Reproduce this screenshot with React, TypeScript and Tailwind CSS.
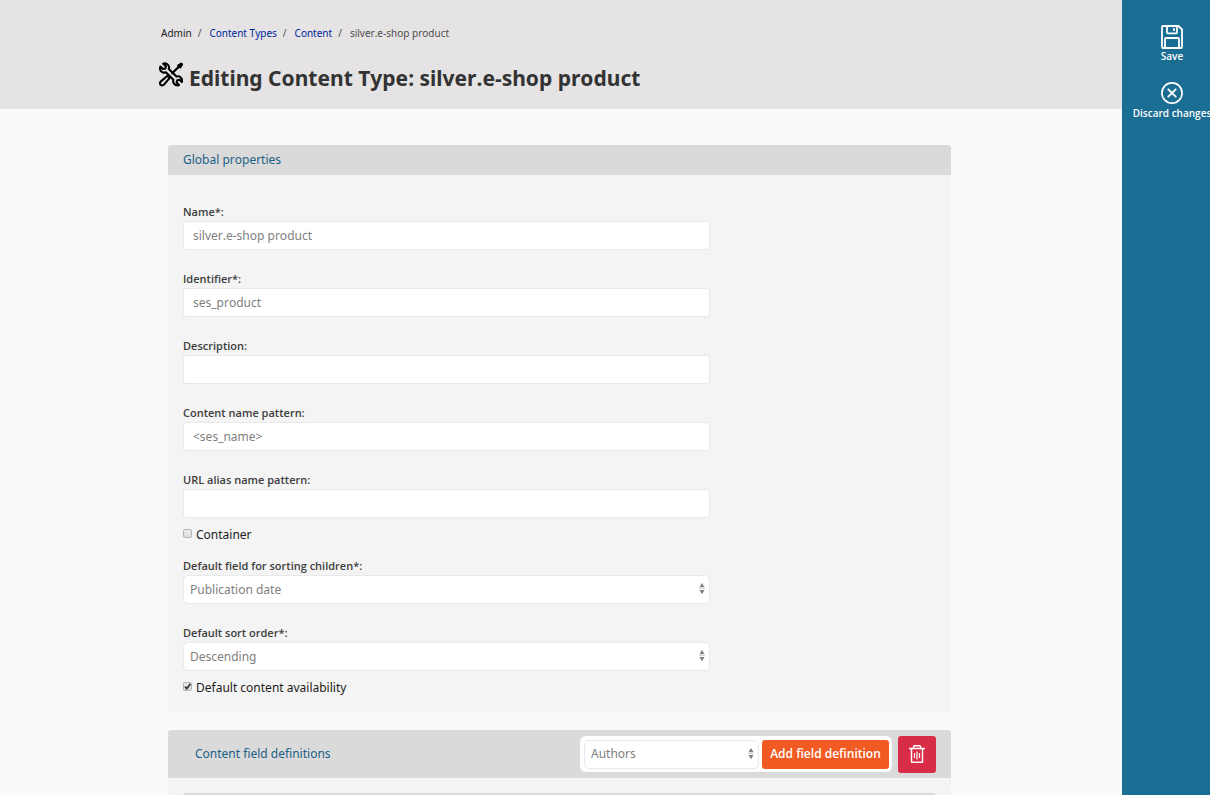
import React, { useId } from "react";

function ToolsIcon() {
  return (
    <svg
      viewBox="0 0 24 24"
      className="h-[25px] w-6 shrink-0"
      fill="none"
      stroke="#000"
      strokeWidth="2.1"
      strokeLinejoin="round"
      strokeLinecap="round"
      aria-hidden="true"
    >
      <path d="M4.2 1.2 6.9 3.7 6.4 6 4 6.6 1.4 4C.6 6.200 1.200 8.200 2.800 9.400 4 10.200 5.600 10.300 6.800 9.800L14.400 17.300C13.900 18.700 14.100 20.300 15.300 21.600 16.500 22.800 18.400 23.200 20 22.600L17.600 20.100 18.200 17.800 20.500 17.200 22.800 19.600C23.400 18 23 16.100 21.700 14.900 20.500 13.800 18.900 13.600 17.500 14.100L9.800 6.500C10.300 5.100 10.100 3.600 9 2.400 7.700 1 5.800.6 4.200 1.200Z" />
      <path d="M8.600 13.200 2.200 18.600C.9 19.800.8 21.300 1.600 22.200 2.500 23.200 4.100 23.100 5.200 21.900L10.700 15.300Z" fill="#e5e3e4" />
      <path d="M13.200 10.800 20.300 3.700" strokeWidth="2.200" />
      <path d="M19.200 3 22.200 1 23.100 1.900 21.200 4.900Z" fill="#000" />
    </svg>
  );
}

function SaveIcon() {
  return (
    <svg viewBox="0 0 22 24" className="h-6 w-[22px]" fill="none" stroke="#fff" strokeWidth="1.8" strokeLinejoin="round" aria-hidden="true">
      <path d="M1 2Q1 1 2 1H17.500L21 4.500V22Q21 23 20 23H2Q1 23 1 22Z" />
      <path d="M6 1V7.300Q6 8.300 7 8.300H15Q16 8.300 16 7.300V1" />
      <path d="M13 3V6" />
      <path d="M4 23V14Q4 13 5 13H17Q18 13 18 14V23" />
    </svg>
  );
}

function DiscardIcon() {
  return (
    <svg viewBox="0 0 22 22" className="size-[22px]" fill="none" stroke="#fff" strokeWidth="1.700" strokeLinecap="round" aria-hidden="true">
      <circle cx="11" cy="11" r="10.100" />
      <path d="M7.300 7.300 14.700 14.700M14.700 7.300 7.300 14.700" strokeWidth="1.900" />
    </svg>
  );
}

function TrashIcon() {
  return (
    <svg viewBox="0 0 16 18" className="h-[18px] w-4" fill="none" stroke="#fff" aria-hidden="true">
      <path d="M0 3.500H16" strokeWidth="1.500" />
      <path d="M4.500 3V1.500Q4.500.7 5.300.7H10.700Q11.500.7 11.500 1.500V3" strokeWidth="1.400" />
      <path d="M2.500 4V16.500Q2.500 17.300 3.300 17.300H12.700Q13.500 17.300 13.500 16.500V4" strokeWidth="1.500" />
      <path d="M5.500 8V13M8 6.500V14.500M10.500 8V13" strokeWidth="1.200" />
    </svg>
  );
}

type FieldProps = { label: string; value: string };

function TextField({ label, value }: FieldProps) {
  const id = useId();
  return (
    <div className="flex flex-col">
      <label htmlFor={id} className="font-['Open_Sans','Noto_Sans',sans-serif] text-[11px] leading-[18px] font-semibold text-[#3d3d3d]">
        {label}
      </label>
      <input
        id={id}
        type="text"
        defaultValue={value}
        className="h-[29px] w-full rounded-[3px] border border-[#e9e9e9] bg-white px-[9px] text-xs text-[#808080] outline-none"
      />
    </div>
  );
}

function Picker({ id, label, options }: { id: string; label?: string; options: string[] }) {
  return (
    <div className="relative w-full">
      <select
        id={id}
        aria-label={label}
        className="block h-[29px] w-full appearance-none rounded-[5px] border border-[#e9e9e9] bg-white pr-5 pl-[6px] text-xs text-[#808080] outline-none"
      >
        {options.map((o) => (
          <option key={o}>{o}</option>
        ))}
      </select>
      <svg viewBox="0 0 6 12" className="pointer-events-none absolute top-2 right-[5px] h-3 w-[6px]" aria-hidden="true">
        <path d="M3 0 5.600 4.300H.4ZM3 11.300.4 7H5.600Z" fill="#808080" />
        <path d="M0 5.500H6" stroke="#d4d4d4" />
      </svg>
    </div>
  );
}

function SelectField({ label, options }: { label: string; options: string[] }) {
  const id = useId();
  return (
    <div className="flex flex-col">
      <label htmlFor={id} className="font-['Open_Sans','Noto_Sans',sans-serif] text-[11px] leading-[18px] font-semibold text-[#3d3d3d]">
        {label}
      </label>
      <Picker id={id} options={options} />
    </div>
  );
}

function CheckField({ label, checked }: { label: string; checked?: boolean }) {
  return (
    <label className="flex h-5 w-fit items-center gap-1 text-xs text-[#1c1c1c]">
      <span className="relative mb-1 flex">
        <input
          type="checkbox"
          defaultChecked={checked}
          className="peer size-[9px] appearance-none rounded-[2px] border border-[#b4b4b4] bg-linear-to-b from-[#ededed] to-[#dcdcdc]"
        />
        <svg viewBox="0 0 9 9" className="pointer-events-none absolute inset-0 hidden size-[9px] peer-checked:block" aria-hidden="true">
          <path d="M2 4.600 3.800 6.600 7.400 1.800" fill="none" stroke="#333" strokeWidth="1.700" />
        </svg>
      </span>
      {label}
    </label>
  );
}

export default function App() {
  return (
    <div className="flex h-screen overflow-hidden bg-[#fafafa] font-['Noto_Sans',sans-serif] [font-kerning:none]">
      <main className="min-w-0 flex-1 overflow-hidden">
        <header className="h-[109px] bg-[#e5e3e4] pt-[25px] pl-[159px]">
          <nav aria-label="Breadcrumb">
            <ol className="flex pl-[2px] text-[10px] leading-4 text-[#4d4d4d]">
              <li className="text-[#222]">Admin</li>
              <li className="pl-[6px]" aria-hidden="true">/</li>
              <li className="pl-2"><a href="#types" className="text-[#00269b]">Content Types</a></li>
              <li className="pl-[6px]" aria-hidden="true">/</li>
              <li className="pl-2"><a href="#content" className="text-[#00269b]">Content</a></li>
              <li className="pl-[6px]" aria-hidden="true">/</li>
              <li className="pl-2">silver.e-shop product</li>
            </ol>
          </nav>
          <div className="mt-[21px] flex items-start gap-[6px]">
            <ToolsIcon />
            <h1 className="text-[21px] leading-8 font-bold text-[#333]">Editing Content Type: silver.e-shop product</h1>
          </div>
        </header>

        <form className="flex flex-col gap-[18px] pt-9 pr-[171px] pl-[168px]">
          <section className="rounded-[3px] bg-[#f4f4f4]">
            <h2 className="rounded-t-[3px] bg-[#dadada] px-[15px] text-xs leading-[30px] text-[#1a6086]">Global properties</h2>
            <div className="px-[15px] pt-7 pb-[14px]">
              <div className="flex w-[70%] flex-col">
                <div className="flex flex-col gap-5">
                  <TextField label="Name*:" value="silver.e-shop product" />
                  <TextField label="Identifier*:" value="ses_product" />
                  <TextField label="Description:" value="" />
                  <TextField label="Content name pattern:" value="<ses_name>" />
                  <TextField label="URL alias name pattern:" value="" />
                </div>
                <div className="pt-[7px] pb-3">
                  <CheckField label="Container" />
                </div>
                <div className="flex flex-col gap-5">
                  <SelectField label="Default field for sorting children*:" options={["Publication date", "Name"]} />
                  <SelectField label="Default sort order*:" options={["Descending", "Ascending"]} />
                </div>
                <div className="pt-[7px]">
                  <CheckField label="Default content availability" checked />
                </div>
              </div>
            </div>
          </section>

          <section className="rounded-[3px] bg-[#f4f4f4]">
            <div className="flex h-12 items-center rounded-t-[3px] bg-[#dadada] pr-[15px] pl-[27px]">
              <h2 className="flex-1 text-xs text-[#1a6086]">Content field definitions</h2>
              <div className="flex h-9 w-[312px] items-center gap-[3px] rounded-md bg-white pr-[3px] pl-1">
                <Picker id="field-type" label="Field type" options={["Authors", "Text line"]} />
                <button type="button" className="h-[29px] w-[127px] shrink-0 rounded-[3px] bg-[#f15a22] font-['Open_Sans','Noto_Sans',sans-serif] text-xs font-semibold text-white">
                  Add field definition
                </button>
              </div>
              <button type="button" aria-label="Delete" className="ml-[6px] flex h-[37px] w-[38px] items-center justify-center rounded-[3px] bg-[#d92d47]">
                <TrashIcon />
              </button>
            </div>
            <div className="px-[15px] pt-[15px]">
              <div className="h-8 rounded-t-[3px] bg-[#dadada]" />
            </div>
          </section>
        </form>
      </main>

      <aside className="w-[88px] shrink-0 bg-[#1a6d93] pt-[25px] pl-3">
        <div className="flex w-[76px] flex-col items-center gap-[19px] font-['Open_Sans','Noto_Sans',sans-serif] text-[10px] font-semibold whitespace-nowrap text-white">
          <button type="button" className="flex flex-col items-center leading-[14px]">
            <SaveIcon />
            Save
          </button>
          <button type="button" className="flex flex-col items-center gap-[2px] leading-[14px]">
            <DiscardIcon />
            Discard changes
          </button>
        </div>
      </aside>
    </div>
  );
}
